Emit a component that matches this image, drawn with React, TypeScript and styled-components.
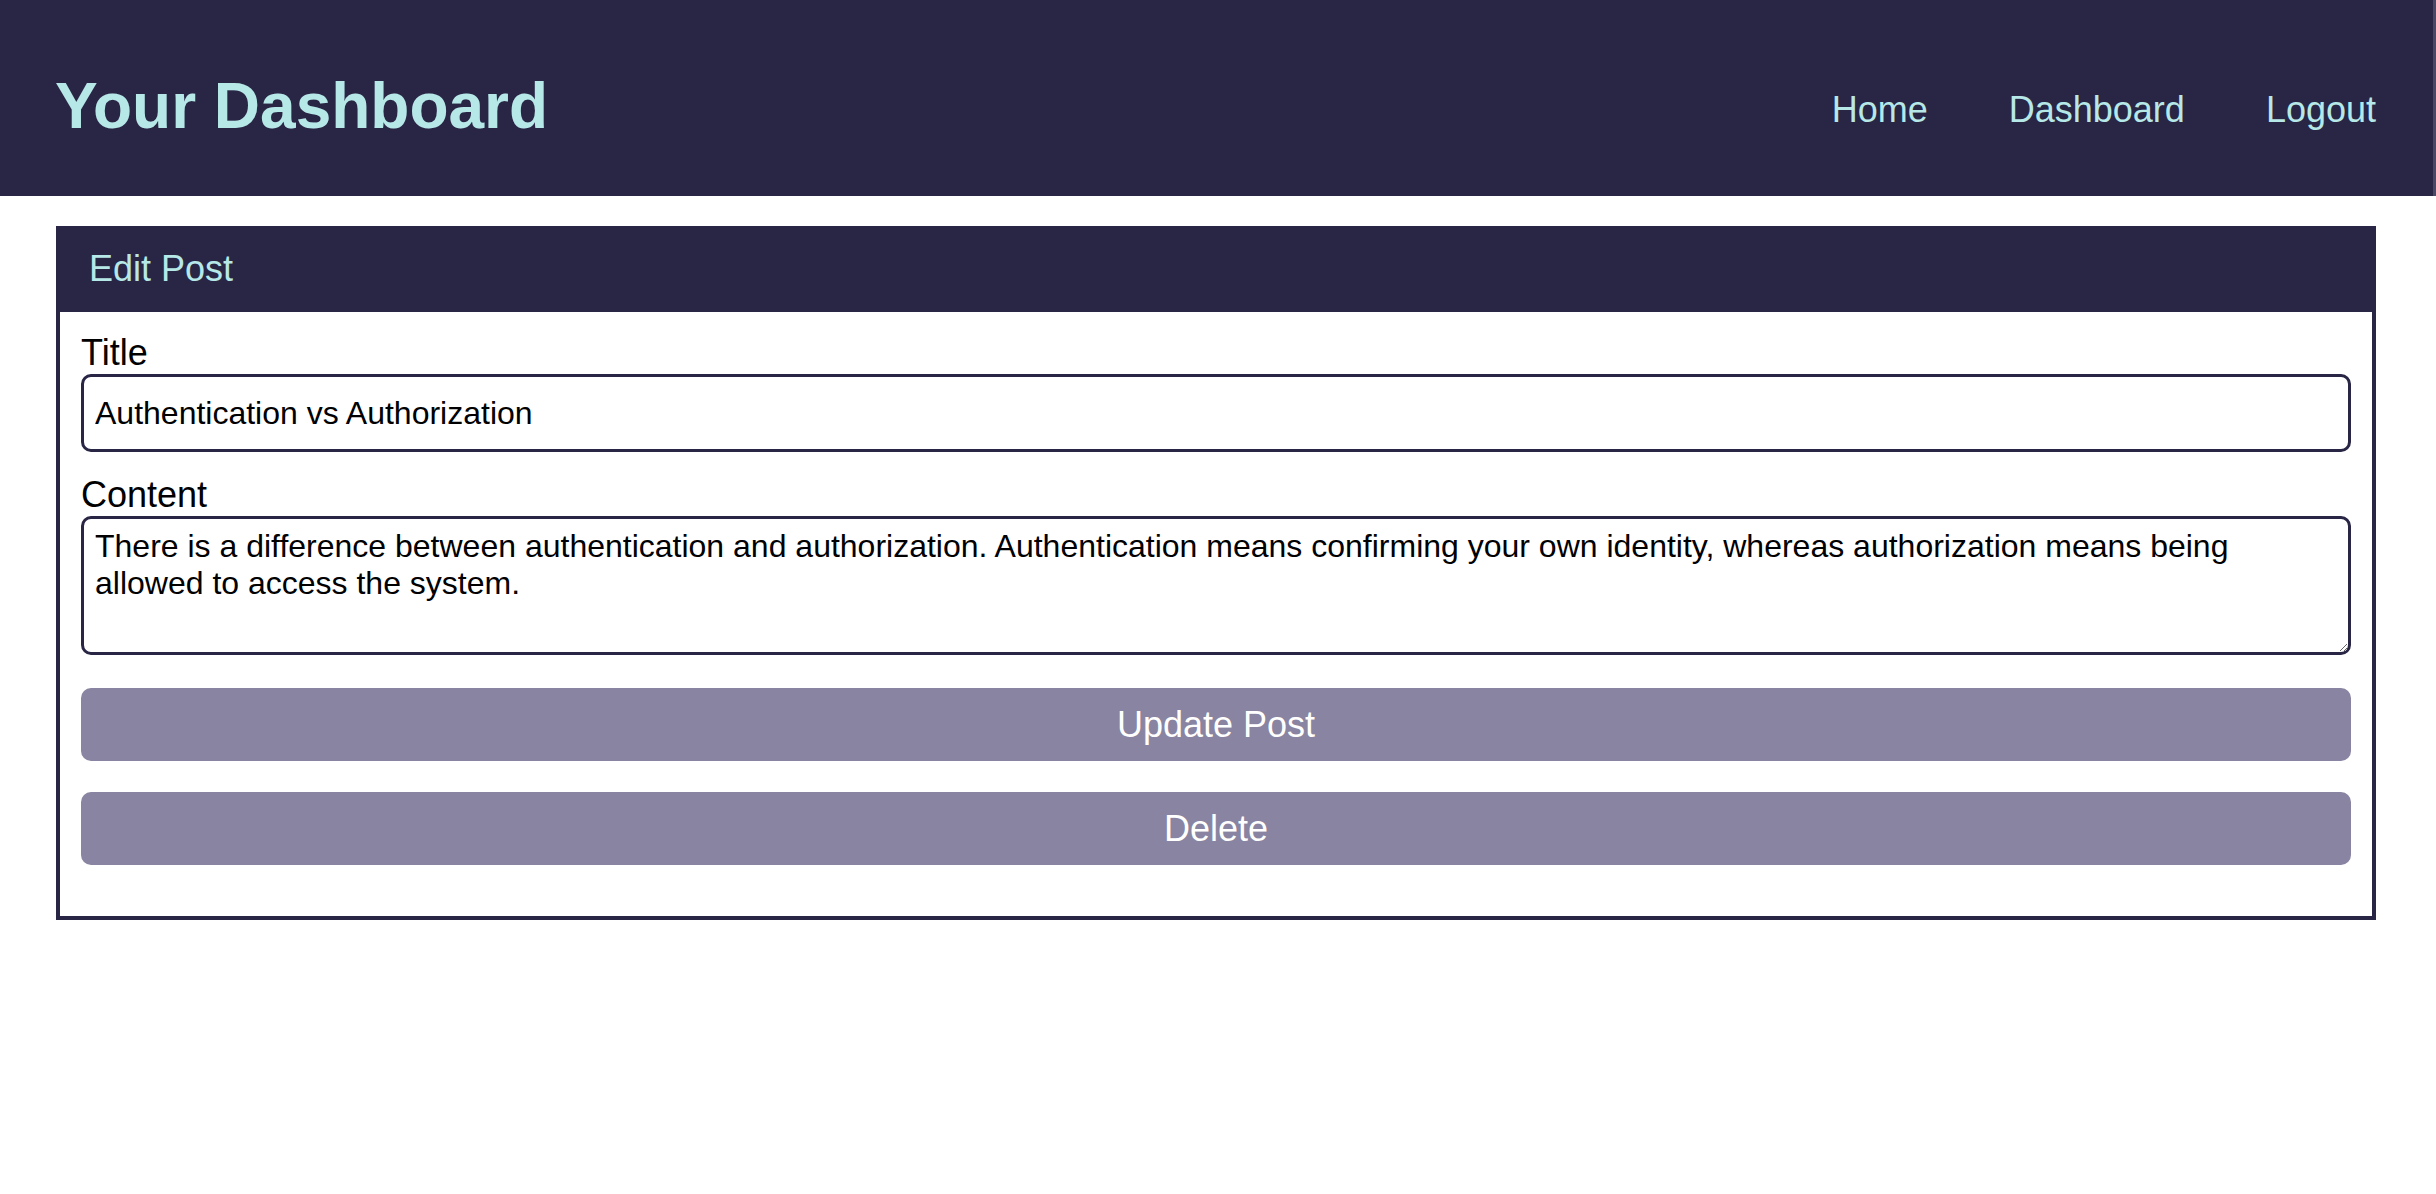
import React from "react";
import styled, { createGlobalStyle } from "styled-components";

const GlobalStyle = createGlobalStyle`
  html, body {
    margin: 0;
    padding: 0;
    background: #ffffff;
    font-family: "Liberation Sans", Arial, Helvetica, sans-serif;
  }
  * { box-sizing: border-box; }
`;

const DARK = "#282545";
const ACCENT = "#b7e8e8";

const Header = styled.header`
  height: 196px;
  background: ${DARK};
  border-right: 3px solid #4a4762;
  display: flex;
  align-items: center;
  justify-content: space-between;
  padding: 16px 57px 0 55px;
`;

const Brand = styled.h1`
  margin: 0;
  font-size: 64px;
  font-weight: 700;
  color: ${ACCENT};
`;

const Nav = styled.nav`
  display: flex;
  gap: 81px;
  margin-top: 8px;
`;

const NavLink = styled.a`
  font-size: 36px;
  color: ${ACCENT};
  text-decoration: none;
  cursor: pointer;
`;

const Card = styled.section`
  margin: 30px 60px 0 56px;
  border: 4px solid ${DARK};
  border-top: none;
`;

const CardHeader = styled.div`
  height: 86px;
  background: ${DARK};
  display: flex;
  align-items: center;
  padding: 0 30px 0 33px;
  margin: 0 -4px;
  font-size: 36px;
  color: ${ACCENT};
`;

const CardBody = styled.form`
  padding: 20px 21px 51px 21px;
  display: flex;
  flex-direction: column;
`;

const Field = styled.div<{ $gap?: number }>`
  display: flex;
  flex-direction: column;
  margin-bottom: ${(p) => p.$gap ?? 0}px;
`;

const Label = styled.label`
  font-size: 36px;
  color: #000;
  line-height: normal;
`;

const TextInput = styled.input`
  height: 78px;
  border: 3px solid ${DARK};
  border-radius: 10px;
  padding: 0 11px;
  font-family: inherit;
  font-size: 32px;
  color: #000;
  background: #fff;
  outline: none;
`;

const TextArea = styled.textarea`
  height: 139px;
  flex: none;
  border: 3px solid ${DARK};
  border-radius: 10px;
  padding: 9px 16px 9px 11px;
  font-family: inherit;
  font-size: 32px;
  line-height: normal;
  color: #000;
  background: #fff;
  outline: none;
  resize: vertical;
`;

const Button = styled.button<{ $gap?: number }>`
  height: 73px;
  width: 100%;
  border: none;
  border-radius: 10px;
  background: #8884a1;
  color: #ffffff;
  font-family: inherit;
  font-size: 36px;
  margin-top: ${(p) => p.$gap ?? 0}px;
  cursor: pointer;
`;

export default function App() {
  return (
    <>
      <GlobalStyle />
      <Header>
        <Brand>Your Dashboard</Brand>
        <Nav>
          <NavLink>Home</NavLink>
          <NavLink>Dashboard</NavLink>
          <NavLink>Logout</NavLink>
        </Nav>
      </Header>
      <Card>
        <CardHeader>Edit Post</CardHeader>
        <CardBody onSubmit={(e) => e.preventDefault()}>
          <Field $gap={22}>
            <Label htmlFor="title">Title</Label>
            <TextInput id="title" defaultValue="Authentication vs Authorization" />
          </Field>
          <Field>
            <Label htmlFor="content">Content</Label>
            <TextArea
              id="content"
              defaultValue="There is a difference between authentication and authorization. Authentication means confirming your own identity, whereas authorization means being allowed to access the system."
            />
          </Field>
          <Button type="submit" $gap={33}>Update Post</Button>
          <Button type="button" $gap={31}>Delete</Button>
        </CardBody>
      </Card>
    </>
  );
}
